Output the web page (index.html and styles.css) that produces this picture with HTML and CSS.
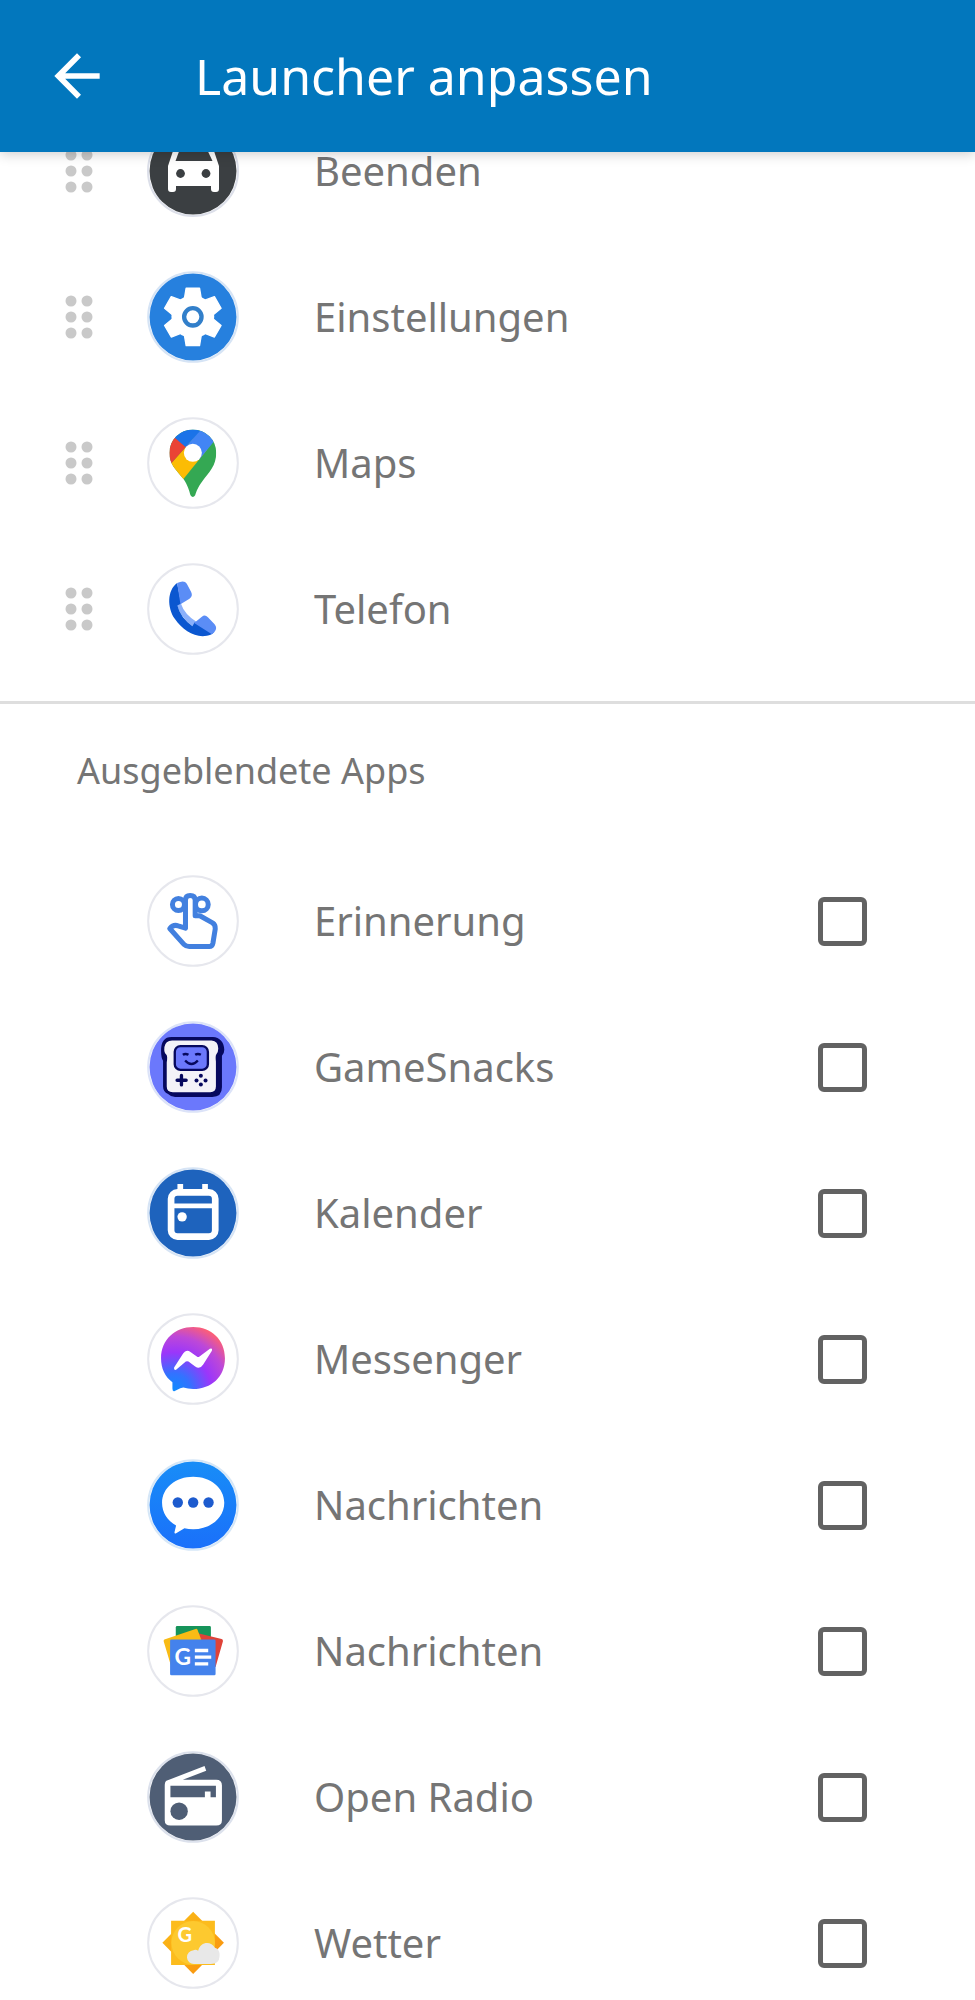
FILE: index.html
```html
<!DOCTYPE html>
<html lang="de">
<head>
<meta charset="utf-8">
<meta name="viewport" content="width=device-width, initial-scale=1">
<title>Launcher anpassen</title>
<link rel="stylesheet" href="styles.css">
</head>
<body>
<svg class="defs" aria-hidden="true">
  <symbol id="dots" viewBox="0 0 28 44">
    <g fill="#c9c9c9"><circle cx="6" cy="6" r="5.5"/><circle cx="22" cy="6" r="5.5"/><circle cx="6" cy="22" r="5.5"/><circle cx="22" cy="22" r="5.5"/><circle cx="6" cy="38" r="5.5"/><circle cx="22" cy="38" r="5.5"/></g>
  </symbol>
</svg>
<div class="app">
  <header class="bar">
    <button class="back" type="button" aria-label="Zurück">
      <svg class="back-icon" viewBox="0 0 24 24" aria-hidden="true"><path fill="#fff" d="M20 11H7.83l5.59-5.59L12 4l-8 8 8 8 1.41-1.41L7.83 13H20z"/></svg>
    </button>
    <h1 class="title">Launcher anpassen</h1>
  </header>
  <main class="content">
    <ul class="list list-visible">
      <li class="row">
        <button class="drag" type="button" aria-label="Beenden verschieben"><svg class="drag-icon"><use href="#dots"/></svg></button>
        <svg class="icon" viewBox="0 0 92 92" aria-hidden="true">
          <circle cx="46" cy="46" r="45" fill="#fff" stroke="#dcdfe9" stroke-width="2"/><circle cx="46" cy="46" r="43.5" fill="#3b3f42"/>
          <path fill="#fff" d="M21 41 26 26Q27 22 31 22H62Q66 22 67 26L72 41V64Q72 67 69 67H67Q64 67 64 64V61H29V64Q29 67 26 67H24Q21 67 21 64Z"/>
          <path fill="#3b3f42" d="M28.500 36 32 26.500H61L65.500 36Z"/><circle cx="33.500" cy="48.500" r="4.400" fill="#3b3f42"/><circle cx="59" cy="48.500" r="4.400" fill="#3b3f42"/>
        </svg>
        <span class="label">Beenden</span>
      </li>
      <li class="row">
        <button class="drag" type="button" aria-label="Einstellungen verschieben"><svg class="drag-icon"><use href="#dots"/></svg></button>
        <svg class="icon" viewBox="290 45 275 275" aria-hidden="true">
          <circle cx="427.500" cy="182.500" r="134" fill="#fff" stroke="#d6e4f5" stroke-width="6"/><circle cx="427.500" cy="182.500" r="130" fill="#2680de"/>
          <g transform="translate(427 182)" fill="#fff"><circle r="64"/>
            <g stroke="#fff" stroke-width="4" stroke-linejoin="round"><path id="tooth" d="M-20-86H20L25-56H-25Z"/><use href="#tooth" transform="rotate(60)"/><use href="#tooth" transform="rotate(120)"/><use href="#tooth" transform="rotate(180)"/><use href="#tooth" transform="rotate(240)"/><use href="#tooth" transform="rotate(300)"/></g>
            <circle r="26" stroke="#327fca" stroke-width="13"/></g>
        </svg>
        <span class="label">Einstellungen</span>
      </li>
      <li class="row">
        <button class="drag" type="button" aria-label="Maps verschieben"><svg class="drag-icon"><use href="#dots"/></svg></button>
        <svg class="icon" viewBox="290 49 275 275" aria-hidden="true">
          <defs><clipPath id="pin"><path d="M357 156A70 70 0 0 1 497 156C497 195 475 215 456 240C442 259 438 270 434 283Q427 293 420 283C416 268 412 253 399 234C375 205 357 190 357 156Z"/></clipPath></defs>
          <circle cx="427.500" cy="186.500" r="134" fill="#fff" stroke="#e6e7ed" stroke-width="6"/>
          <g clip-path="url(#pin)"><path fill="#34a853" d="M340 70H510V300H340Z"/><path fill="#fbbc04" d="M350 201 427 115 470 146 399 234 380 240Z"/><path fill="#ea4335" d="M340 100 374 111 412 132 362 188 340 210Z"/><path fill="#1a73e8" d="M374 112 360 80H452L449 92 405 139Z"/><path fill="#4285f4" d="M449 90 500 70V125L490 122 447 175 405 139Z"/></g>
          <circle cx="427" cy="156" r="27" fill="#fff"/>
        </svg>
        <span class="label">Maps</span>
      </li>
      <li class="row">
        <button class="drag" type="button" aria-label="Telefon verschieben"><svg class="drag-icon"><use href="#dots"/></svg></button>
        <svg class="icon" viewBox="290 488 275 275" aria-hidden="true">
          <circle cx="427.500" cy="625.500" r="134" fill="#fff" stroke="#e6e7ed" stroke-width="6"/>
          <path fill="#8ab0fb" d="M380 613 391 608Q402 642 440 665L427 678Q389 650 380 613Z"/>
          <path fill="#0b57d0" d="M380 548C350 570 350 622 373 655C400 694 441 717 482 702L490 696 432 666 426 677Q389 650 381 615L392 609Z"/>
          <path fill="#5b8df6" d="M380 548Q401 537 409 550L422 575Q428 587 417 595L390 611ZM431 667 454 649Q463 641 472 650L492 671Q502 682 491 695L484 701Z"/>
        </svg>
        <span class="label">Telefon</span>
      </li>
    </ul>
    <section class="hidden-apps">
      <h2 class="section-title">Ausgeblendete Apps</h2>
      <ul class="list">
        <li class="row">
          <svg class="icon" viewBox="19 27 275 275" aria-hidden="true">
            <circle cx="156.500" cy="164.500" r="134" fill="#fff" stroke="#e6e7ed" stroke-width="6"/>
            <g fill="#fff" stroke="#4280df" stroke-width="15" stroke-linejoin="round"><circle cx="113" cy="115" r="18"/><circle cx="183" cy="115" r="19"/><path d="M134 186V102Q134 88 148 88Q163 88 163 102V149H177L215 170Q224 176 223 188L216 231Q214 241 205 241H145Q136 241 130 235L87 187Q98 174 112 179Z"/></g>
          </svg>
          <label class="label" for="app-erinnerung">Erinnerung</label><input class="check" type="checkbox" id="app-erinnerung">
        </li>
        <li class="row">
          <svg class="icon" viewBox="19 30 275 275" aria-hidden="true">
            <circle cx="156.500" cy="167.500" r="134" fill="#fff" stroke="#dce3f8" stroke-width="6"/><circle cx="156.500" cy="167.500" r="130" fill="#6b78fc"/>
            <path fill="#06085e" d="M92 78H216C236 78 250 95 250 116Q250 128 243 134V228Q243 257 214 257H103Q91 257 82 248Q67 242 67 226V149Q61 141 61 119Q61 78 92 78Z"/>
            <path fill="#f3f2f8" d="M94 88H212Q232 90 232 112Q232 124 226 130Q223 134 225 151V226Q225 243 208 243H96Q78 243 78 226V153Q81 136 77 131Q69 126 71 108Q74 88 94 88Z"/>
            <rect x="102" y="105" width="99" height="71" rx="17" fill="#6b78fc" stroke="#06085e" stroke-width="7"/>
            <g stroke="#06085e" fill="none" stroke-width="7"><path d="M126 131Q134 126 143 131M163 131Q171 126 180 131M133 148Q152 169 171 148"/><path stroke-width="10" stroke-linecap="round" d="M109 207H136M122 193V221"/></g>
            <g fill="#06085e"><circle cx="180" cy="194" r="6"/><circle cx="167" cy="208" r="6"/><circle cx="194" cy="208" r="6"/><circle cx="180" cy="220" r="6"/></g>
          </svg>
          <label class="label" for="app-gamesnacks">GameSnacks</label><input class="check" type="checkbox" id="app-gamesnacks">
        </li>
        <li class="row">
          <svg class="icon" viewBox="19 37 275 275" aria-hidden="true">
            <circle cx="156.500" cy="174.500" r="134" fill="#fff" stroke="#d6e4f5" stroke-width="6"/><circle cx="156.500" cy="174.500" r="130" fill="#1e63bd"/>
            <rect x="91" y="113" width="132" height="132" rx="19" fill="none" stroke="#fff" stroke-width="20"/><path fill="#fff" d="M110 88H127V108H110ZM184 88H201V108H184ZM98 146H218V160H98Z"/><circle cx="124" cy="186" r="14" fill="#fff"/>
          </svg>
          <label class="label" for="app-kalender">Kalender</label><input class="check" type="checkbox" id="app-kalender">
        </li>
        <li class="row">
          <svg class="icon" viewBox="19 25 275 275" aria-hidden="true">
            <defs><radialGradient id="msg" gradientUnits="userSpaceOnUse" cx="97" cy="258" r="210"><stop offset="0" stop-color="#0d8cff"/><stop offset=".25" stop-color="#3372ff"/><stop offset=".55" stop-color="#9b36fa"/><stop offset=".78" stop-color="#bd48d8"/><stop offset="1" stop-color="#ff6072"/></radialGradient></defs>
            <circle cx="156.500" cy="162.500" r="134" fill="#fff" stroke="#e6e7ed" stroke-width="6"/>
            <path fill="url(#msg)" d="M157 67C211 67 252 105 252 160C252 216 211 252 157 252Q141 252 128 248Q122 248 102 258Q95 261 95 251V232C73 215 61 191 61 160C61 105 103 67 157 67Z"/>
            <path fill="#fff" d="M100 188 127 146Q136 132 150 142L168 155Q172 158 176 155L207 132Q216 129 213 138L187 179Q177 195 163 185L143 170Q139 168 135 170L106 195Q98 197 100 188Z"/>
          </svg>
          <label class="label" for="app-messenger">Messenger</label><input class="check" type="checkbox" id="app-messenger">
        </li>
        <li class="row">
          <svg class="icon" viewBox="19 27 275 275" aria-hidden="true">
            <defs><linearGradient id="sms" x2="0" y2="1"><stop stop-color="#188df7"/><stop offset="1" stop-color="#1a70fa"/></linearGradient></defs>
            <circle cx="156.500" cy="164.500" r="134" fill="#fff" stroke="#d6e7f7" stroke-width="6"/><circle cx="156.500" cy="164.500" r="130" fill="url(#sms)"/>
            <path fill="#fff" d="M157 80C209 80 250 113 250 158C250 203 209 237 157 237Q143 237 131 234L106 249Q99 252 102 242L106 226C80 212 64 187 64 158C64 113 105 80 157 80Z"/>
            <g fill="#1d5bce"><circle cx="111" cy="157" r="15.500"/><circle cx="157" cy="157" r="15.500"/><circle cx="203" cy="157" r="15.500"/></g>
          </svg>
          <label class="label" for="app-nachrichten-sms">Nachrichten</label><input class="check" type="checkbox" id="app-nachrichten-sms">
        </li>
        <li class="row">
          <svg class="icon" viewBox="19 33 275 275" aria-hidden="true">
            <circle cx="156.500" cy="170.500" r="134" fill="#fff" stroke="#e6e7ed" stroke-width="6"/>
            <rect x="105" y="96" width="105" height="60" rx="4" fill="#16945a"/><path fill="#df4238" d="M150 112 242 135Q247 136 246 141L224 218H150Z"/><path fill="#f8bb15" d="M71 136 164 105Q168 103 170 107L190 160 90 212 69 142Q68 138 71 136Z"/>
            <rect x="88" y="136" width="136" height="107" rx="4" fill="#4482ec"/>
            <text class="logo-g" x="101" y="212" font-size="68">G</text><path fill="#fff" d="M162 164H202V174H162ZM162 184H211V194H162ZM162 204H202V214H162Z"/>
          </svg>
          <label class="label" for="app-nachrichten-news">Nachrichten</label><input class="check" type="checkbox" id="app-nachrichten-news">
        </li>
        <li class="row">
          <svg class="icon" viewBox="19 35 275 275" aria-hidden="true">
            <circle cx="156.500" cy="172.500" r="134" fill="#fff" stroke="#dce1ec" stroke-width="6"/><circle cx="156.500" cy="172.500" r="130" fill="#4f5e75"/>
            <path fill="#fff" d="M77 124 191 80 196 94 126 121H226Q243 121 243 138V242Q243 258 226 258H89Q72 258 72 242V139Q72 127 77 124Z"/>
            <path fill="#4f5e75" d="M89 139H225V173H209V156H192V173H89Z"/><circle cx="115" cy="215" r="26" fill="#4f5e75"/>
          </svg>
          <label class="label" for="app-radio">Open Radio</label><input class="check" type="checkbox" id="app-radio">
        </li>
        <li class="row">
          <svg class="icon" viewBox="19 475 275 275" aria-hidden="true">
            <defs><linearGradient id="sun" x2="1" y2="1"><stop stop-color="#fbbf19"/><stop offset="1" stop-color="#f98e0d"/></linearGradient></defs>
            <circle cx="156.500" cy="612.500" r="134" fill="#fff" stroke="#e6e7ed" stroke-width="6"/>
            <path fill="url(#sun)" d="M157 519 249 612 157 705 65 612Z"/><path fill="#fcbc1d" d="M91 546H222V678H91Z"/><circle cx="157" cy="612" r="65" fill="#fdc92f"/>
            <path fill="#e8e8e8" d="M160 675A20 20 0 0 1 158 634Q165 631 172 636C178 607 211 605 222 627Q237 631 236 651Q235 675 210 675Z"/>
            <text class="logo-g" x="110" y="609" font-size="60">G</text>
          </svg>
          <label class="label" for="app-wetter">Wetter</label><input class="check" type="checkbox" id="app-wetter">
        </li>
      </ul>
    </section>
  </main>
</div>
</body>
</html>
```
FILE: styles.css
```css
* {
  box-sizing: border-box;
}

body {
  margin: 0;
  background: #fff;
  color: #757575;
  font-family: "Noto Sans", "Open Sans", sans-serif;
}

button {
  padding: 0;
  border: 0;
  background: none;
  cursor: pointer;
}

.defs {
  position: absolute;
  width: 0;
  height: 0;
}

.app {
  display: flex;
  flex-direction: column;
  height: 100vh;
}

.bar {
  position: relative;
  z-index: 1;
  display: flex;
  flex: none;
  align-items: center;
  gap: 84px;
  min-height: 152px;
  padding: 0 43px;
  background: #0277bd;
  box-shadow: 0 2px 12px rgba(0, 0, 0, 0.2);
}

.back,
.back-icon {
  display: block;
  width: 68px;
  height: 68px;
}

.title {
  margin: 0;
  color: #fff;
  font-size: 50px;
  font-weight: 400;
  line-height: 68px;
}

.content {
  flex: 1;
  min-height: 0;
  overflow-y: auto;
  scrollbar-width: none;
}

.list {
  margin: 0;
  padding: 0;
  list-style: none;
}

/* The upper list starts partly scrolled beneath the bar. */
.list-visible {
  margin-top: -54px;
  padding-bottom: 19px;
}

.row {
  display: grid;
  grid-template-columns: 28px 92px 1fr auto;
  align-items: center;
  height: 146px;
  padding: 0 108px 0 65px;
}

.drag,
.drag-icon {
  display: block;
  width: 28px;
  height: 44px;
}

.icon {
  grid-column: 2;
  width: 92px;
  height: 92px;
  margin-left: 54px;
}

.label {
  grid-column: 3;
  margin-left: 129px;
  font-size: 40px;
  line-height: 36px;
}

.row:not(:has(.drag)) .label {
  cursor: pointer;
}

.check {
  appearance: none;
  width: 49px;
  height: 49px;
  margin: 0;
  border: 5px solid #626262;
  border-radius: 6px;
  background: #fff;
}

.check:checked {
  background: #0277bd;
}

.hidden-apps {
  border-top: 3px solid #dedede;
}

.section-title {
  margin: 0;
  padding: 42px 77px 52px;
  font-size: 36px;
  font-weight: 400;
  line-height: 50px;
}

.logo-g {
  fill: #fff;
  font-family: "Lato", sans-serif;
  font-weight: 700;
}
```
